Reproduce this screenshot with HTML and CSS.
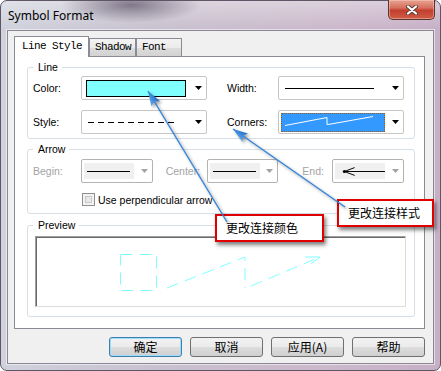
FILE: index.html
```html
<!DOCTYPE html>
<html lang="zh-CN">
<head>
    <meta charset="UTF-8">
    <meta name="viewport" content="width=device-width, initial-scale=1.0">
    <title>Symbol Format</title>
    <link rel="stylesheet" href="styles.css">
</head>
<body>
    <div class="window">
        <div class="titlebar">
            <span class="title">Symbol Format</span>
            <div class="close-btn">
                <svg width="12" height="10" viewBox="0 0 12 10">
                    <path d="M2 1.5 L10 8.5 M10 1.5 L2 8.5" stroke="#5b3b36" stroke-width="4" stroke-linecap="round"/>
                    <path d="M2 1.5 L10 8.5 M10 1.5 L2 8.5" stroke="#fff" stroke-width="2.2" stroke-linecap="round"/>
                </svg>
            </div>
        </div>

        <div class="client">
            <div class="tabs">
                <div class="tab active">Line Style</div>
                <div class="tab tab-shadow">Shadow</div>
                <div class="tab tab-font">Font</div>
            </div>

            <div class="tab-page">
                <!-- Line -->
                <fieldset class="group group-line">
                    <legend>Line</legend>
                    <div class="line-grid">
                        <span class="field-label">Color:</span>
                        <div class="combo">
                            <div class="combo-value"><span class="swatch"></span></div>
                            <span class="drop"><svg width="7" height="4" viewBox="0 0 7 4"><path d="M0 0H7L3.5 4Z"/></svg></span>
                        </div>
                        <span class="field-label gap-left">Width:</span>
                        <div class="combo">
                            <div class="combo-value pad-line">
                                <svg width="89" height="3" viewBox="0 0 89 3"><line x1="0" y1="1.5" x2="89" y2="1.5" stroke="#000" stroke-width="1"/></svg>
                            </div>
                            <span class="drop"><svg width="7" height="4" viewBox="0 0 7 4"><path d="M0 0H7L3.5 4Z"/></svg></span>
                        </div>

                        <span class="field-label">Style:</span>
                        <div class="combo">
                            <div class="combo-value pad-line">
                                <svg width="89" height="3" viewBox="0 0 89 3"><line x1="0" y1="1.5" x2="89" y2="1.5" stroke="#000" stroke-width="1" stroke-dasharray="6 4"/></svg>
                            </div>
                            <span class="drop"><svg width="7" height="4" viewBox="0 0 7 4"><path d="M0 0H7L3.5 4Z"/></svg></span>
                        </div>
                        <span class="field-label gap-left">Corners:</span>
                        <div class="combo">
                            <div class="combo-value">
                                <span class="selected-item">
                                    <svg width="102" height="17" viewBox="0 0 102 17">
                                        <polyline points="3,11.5 45,3.5 45,10.5 49,10 91,2.5" fill="none" stroke="#fff" stroke-width="1"/>
                                    </svg>
                                </span>
                            </div>
                            <span class="drop"><svg width="7" height="4" viewBox="0 0 7 4"><path d="M0 0H7L3.5 4Z"/></svg></span>
                        </div>
                    </div>
                </fieldset>

                <!-- Arrow -->
                <fieldset class="group group-arrow">
                    <legend>Arrow</legend>
                    <div class="arrow-row">
                        <span class="field-label disabled lbl-begin">Begin:</span>
                        <div class="combo small disabled">
                            <div class="combo-value">
                                <span class="gray-item">
                                    <svg width="44" height="3" viewBox="0 0 44 3"><line x1="0" y1="1.5" x2="43" y2="1.5" stroke="#000"/></svg>
                                </span>
                            </div>
                            <span class="drop"><svg width="7" height="4" viewBox="0 0 7 4"><path d="M0 0H7L3.5 4Z"/></svg></span>
                        </div>
                        <span class="field-label disabled lbl-center">Center:</span>
                        <div class="combo small disabled">
                            <div class="combo-value">
                                <span class="gray-item">
                                    <svg width="44" height="3" viewBox="0 0 44 3"><line x1="0" y1="1.5" x2="43" y2="1.5" stroke="#000"/></svg>
                                </span>
                            </div>
                            <span class="drop"><svg width="7" height="4" viewBox="0 0 7 4"><path d="M0 0H7L3.5 4Z"/></svg></span>
                        </div>
                        <span class="field-label disabled lbl-end">End:</span>
                        <div class="combo small disabled">
                            <div class="combo-value">
                                <span class="gray-item">
                                    <svg width="48" height="11" viewBox="0 0 48 11">
                                        <circle cx="6.5" cy="5.5" r="1.6" fill="#000"/>
                                        <path d="M17 1.5 L6.5 5.5 L17 9.5 M6.5 5.5 H48" fill="none" stroke="#000" stroke-width="1"/>
                                    </svg>
                                </span>
                            </div>
                            <span class="drop"><svg width="7" height="4" viewBox="0 0 7 4"><path d="M0 0H7L3.5 4Z"/></svg></span>
                        </div>
                    </div>
                    <label class="check-row">
                        <span class="checkbox"></span>
                        <span>Use perpendicular arrow</span>
                    </label>
                </fieldset>

                <!-- Preview -->
                <fieldset class="group group-preview">
                    <legend>Preview</legend>
                    <div class="preview-box">
                        <svg width="368" height="68" viewBox="0 0 368 68">
                            <g fill="none" stroke="#80ffff" stroke-width="1">
                                <rect x="83.5" y="16.5" width="36" height="36" stroke-dasharray="12 7"/>
                                <polyline points="130,50 208,19 208,50" stroke-dasharray="12 7"/>
                                <line x1="214" y1="48" x2="283" y2="19" stroke-dasharray="12 7"/>
                                <path d="M268 19 H283 L274 26"/>
                            </g>
                        </svg>
                    </div>
                </fieldset>
            </div>

            <div class="buttons">
                <button class="btn default">确定</button>
                <button class="btn">取消</button>
                <button class="btn">应用(A)</button>
                <button class="btn">帮助</button>
            </div>
        </div>

        <!-- annotations over the dialog -->
        <div class="callout callout-color">更改连接颜色</div>
        <div class="callout callout-style">更改连接样式</div>
        <svg class="pointers" width="441" height="371" viewBox="0 0 441 371">
            <defs>
                <linearGradient id="headFill" x1="0" y1="0" x2="0" y2="1">
                    <stop offset="0" stop-color="#5aa8f0"/>
                    <stop offset="1" stop-color="#1e6cc8"/>
                </linearGradient>
                <marker id="head" markerUnits="userSpaceOnUse" viewBox="0 0 15 10" refX="15" refY="5" markerWidth="15" markerHeight="10" orient="auto">
                    <path d="M0 0 L15 5 L0 10 L3 5 Z" fill="url(#headFill)"/>
                </marker>
            </defs>
            <g class="pointer-lines" stroke="#3385dc" stroke-width="1.4" fill="none">
                <line x1="227" y1="222" x2="148" y2="91" marker-end="url(#head)"/>
                <line x1="345" y1="207" x2="233" y2="129" marker-end="url(#head)"/>
            </g>
        </svg>
    </div>
</body>
</html>
```

FILE: styles.css
```css
body {
    margin: 0;
    background: #fff;
    font-family: "Liberation Sans", Arial, sans-serif;
}

.window {
    position: relative;
    width: 441px;
    height: 371px;
    box-sizing: border-box;
    padding: 0 6px 6px;
    border: 1px solid #5e5667;
    border-radius: 7px;
    background:
        radial-gradient(ellipse 70px 18px at 130px 4px, rgba(80, 70, 92, 0.65), rgba(80, 70, 92, 0)),
        linear-gradient(to bottom, rgba(255, 255, 255, 0.35), rgba(255, 255, 255, 0) 28px),
        linear-gradient(to right, #cfd2dc 0%, #c8c1cf 35%, #cbb8cb 75%, #c6b0c6 100%);
}

/* title bar */
.titlebar {
    display: flex;
    align-items: center;
    height: 29px;
    padding-left: 1px;
}

.title {
    flex: 1;
    font-family: "Noto Sans", sans-serif;
    font-size: 12px;
    color: #000;
}

.close-btn {
    align-self: flex-start;
    display: flex;
    align-items: center;
    justify-content: center;
    width: 47px;
    height: 20px;
    margin-top: -1px;
    margin-right: -1px;
    box-sizing: border-box;
    border: 1px solid #5a3430;
    border-top: none;
    border-radius: 0 0 5px 5px;
    background: linear-gradient(to bottom, #e7a493 0%, #d7705f 40%, #c23f2e 55%, #cf5d45 100%);
    box-shadow: inset 0 0 0 1px rgba(255, 210, 200, 0.45);
}

/* client area */
.client {
    height: 334px;
    box-sizing: border-box;
    padding: 5px 8px 6px 6px;
    background: #f0f0f0;
    border: 1px solid #8b8595;
    box-shadow: 0 0 0 1px rgba(255, 255, 255, 0.55);
}

/* tabs */
.tabs {
    position: relative;
    z-index: 1;
    display: flex;
    align-items: flex-end;
    height: 21px;
    margin-bottom: -1px;
}

.tab {
    box-sizing: border-box;
    height: 18px;
    margin-bottom: 1px;
    padding-left: 5px;
    border: 1px solid #898c95;
    border-bottom: none;
    background: linear-gradient(to bottom, #f3f3f3 0%, #ebebeb 50%, #dddddd 51%, #d2d2d2 100%);
    font-family: "Liberation Mono", "Courier New", monospace;
    font-size: 11px;
    letter-spacing: -0.6px;
    line-height: 17px;
    color: #000;
}

.tab.active {
    width: 75px;
    height: 21px;
    margin-bottom: 0;
    padding-left: 7px;
    background: #fff;
    line-height: 18px;
}

.tab-shadow {
    width: 47px;
}

.tab-font {
    width: 46px;
    margin-left: 0;
}

.tab-page {
    height: 273px;
    box-sizing: border-box;
    padding-top: 4px;
    background: #fff;
    border: 1px solid #898c95;
}

/* group boxes */
.group {
    margin: 0 9px 0 12px;
    border: 1px solid #d5dfe5;
    border-radius: 3px;
    min-width: 0;
}

.group legend {
    padding: 0 4px 0 5px;
    font-size: 10.5px;
    line-height: 13px;
    color: #000;
}

.group-line {
    padding: 2px 10px 4px 5px;
}

.group-arrow {
    margin-top: 4px;
    padding: 3px 10px 7px 5px;
}

.group-preview {
    margin-top: 5px;
    padding: 4px 8px 9px 5px;
}

.field-label {
    font-size: 10.5px;
    color: #000;
    white-space: nowrap;
}

.field-label.disabled {
    color: #a3a3a3;
}

.line-grid {
    display: grid;
    grid-template-columns: 48px 126px 71px 126px;
    grid-auto-rows: 24px;
    row-gap: 10px;
    align-items: center;
}

.gap-left {
    padding-left: 20px;
}

/* combo boxes */
.combo {
    display: flex;
    align-items: center;
    height: 24px;
    box-sizing: border-box;
    border: 1px solid #c6c6c6;
    border-radius: 2px;
    background: #fff;
}

.combo-value {
    flex: 1;
    display: flex;
    align-items: center;
    align-self: stretch;
    padding-left: 4px;
}

.combo-value.pad-line {
    padding-left: 6px;
}

.combo-value svg {
    display: block;
}

.drop {
    display: flex;
    width: 7px;
    margin: 0 4px 0 5px;
    color: #000;
}

.drop svg {
    display: block;
    fill: currentColor;
}

.swatch {
    width: 100px;
    height: 17px;
    box-sizing: border-box;
    border: 1px solid #000;
    background: #80ffff;
}

.selected-item {
    display: flex;
    align-items: center;
    width: 104px;
    height: 19px;
    margin: 1px 0 0 -2px;
    box-sizing: border-box;
    border: 1px dotted #a05a10;
    background: #3399ff;
}

.combo.small {
    width: 72px;
}

.combo.disabled {
    border-color: #b3b3b3;
}

.combo.disabled .combo-value {
    padding-left: 2px;
}

.combo.disabled .drop {
    color: #a3a3a3;
}

.gray-item {
    display: flex;
    align-items: center;
    width: 50px;
    height: 16px;
    padding-left: 3px;
    box-sizing: border-box;
    background: #f0f0f0;
}

.arrow-row {
    display: flex;
    align-items: center;
    height: 24px;
}

.lbl-begin {
    width: 48px;
}

.lbl-center {
    width: 41px;
    margin-left: 13px;
}

.lbl-end {
    width: 30px;
    margin-left: 24px;
}

.check-row {
    display: flex;
    align-items: center;
    gap: 3px;
    height: 13px;
    margin: 10px 0 0 49px;
    font-size: 10.5px;
    color: #000;
}

.checkbox {
    width: 13px;
    height: 13px;
    box-sizing: border-box;
    border: 1px solid #8f8f8f;
    background: linear-gradient(135deg, #dcdcdc 0%, #f4f4f4 100%);
    box-shadow: inset 0 0 0 2px #f2f2f2, inset 0 0 0 3px #c9c9c9;
}

.preview-box {
    height: 71px;
    margin-left: 2px;
    box-sizing: border-box;
    border-top: 1px solid #a0a0a0;
    border-left: 1px solid #a0a0a0;
    border-right: 1px solid #dcdcdc;
    border-bottom: 1px solid #dcdcdc;
    box-shadow: inset 1px 1px 0 #696969;
    background: #fff;
}

.preview-box svg {
    display: block;
    margin: 1px 0 0 1px;
}

/* dialog buttons */
.buttons {
    display: flex;
    justify-content: flex-end;
    gap: 8px;
    margin-top: 8px;
}

.btn {
    width: 73px;
    height: 20px;
    padding: 0;
    border: 1px solid #707070;
    border-radius: 3px;
    background: linear-gradient(to bottom, #f2f2f2 0%, #ebebeb 50%, #dddddd 51%, #cfcfcf 100%);
    font-family: "Noto Sans CJK SC", sans-serif;
    font-size: 12px;
    line-height: 16px;
    color: #000;
}

.btn.default {
    border-color: #3c7fb1;
    box-shadow: inset 0 0 0 1px #9fdcf7;
}

/* annotations */
.callout {
    position: absolute;
    height: 28px;
    box-sizing: border-box;
    padding-left: 9px;
    border: 2px solid #e00000;
    background: #fff;
    box-shadow: 2px 3px 4px rgba(0, 0, 0, 0.5);
    font-family: "Noto Sans CJK SC", sans-serif;
    font-size: 12px;
    line-height: 24px;
    color: #000;
}

.callout-color {
    left: 214px;
    top: 213px;
    width: 109px;
}

.callout-style {
    left: 336px;
    top: 198px;
    width: 97px;
}

.pointers {
    position: absolute;
    left: -1px;
    top: -1px;
    pointer-events: none;
}

.pointer-lines {
    filter: drop-shadow(2px 2px 1.5px rgba(0, 0, 0, 0.4));
}
```
